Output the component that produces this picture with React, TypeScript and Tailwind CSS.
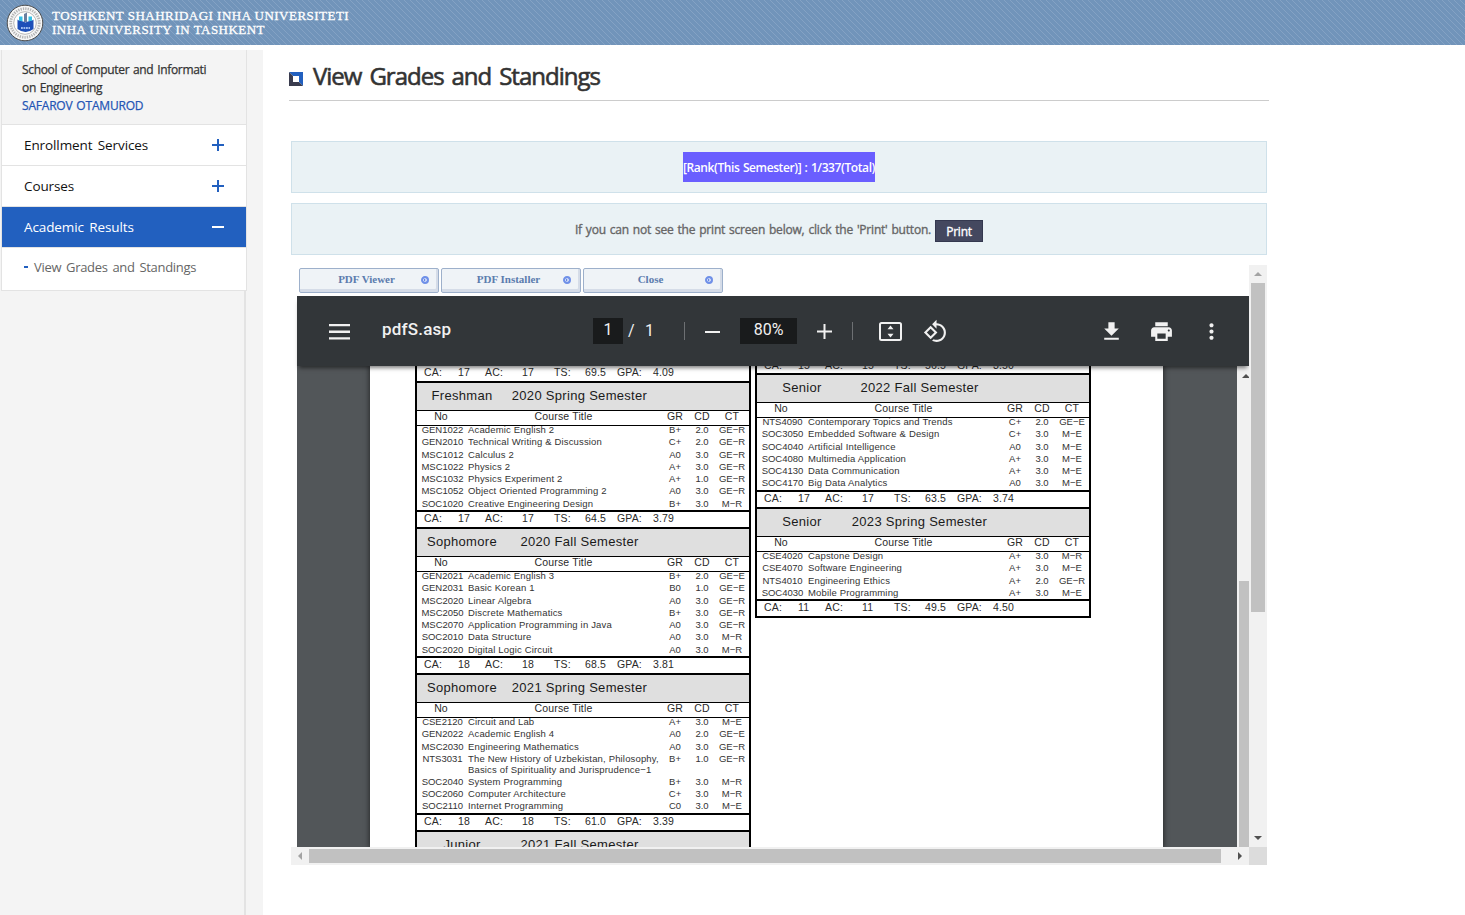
import React from "react";

type Course = [code: string, title: string, grade: string, credit: string, type: string];

interface Semester {
  year: string;
  name: string;
  courses: Course[];
  totals: string[];
  bodyHeight: string;
}

const leftSemesters: Semester[] = [
  {
    year: "Freshman",
    name: "2020 Spring Semester",
    courses: [
      ["GEN1022", "Academic English 2", "B+", "2.0", "GE−R"],
      ["GEN2010", "Technical Writing & Discussion", "C+", "2.0", "GE−R"],
      ["MSC1012", "Calculus 2", "A0", "3.0", "GE−R"],
      ["MSC1022", "Physics 2", "A+", "3.0", "GE−R"],
      ["MSC1032", "Physics Experiment 2", "A+", "1.0", "GE−R"],
      ["MSC1052", "Object Oriented Programming 2", "A0", "3.0", "GE−R"],
      ["SOC1020", "Creative Engineering Design", "B+", "3.0", "M−R"],
    ],
    totals: ["17", "17", "64.5", "3.79"],
    bodyHeight: "h-[84px]",
  },
  {
    year: "Sophomore",
    name: "2020 Fall Semester",
    courses: [
      ["GEN2021", "Academic English 3", "B+", "2.0", "GE−E"],
      ["GEN2031", "Basic Korean 1", "B0", "1.0", "GE−E"],
      ["MSC2020", "Linear Algebra", "A0", "3.0", "GE−R"],
      ["MSC2050", "Discrete Mathematics", "B+", "3.0", "GE−R"],
      ["MSC2070", "Application Programming in Java", "A0", "3.0", "GE−R"],
      ["SOC2010", "Data Structure", "A0", "3.0", "M−R"],
      ["SOC2020", "Digital Logic Circuit", "A0", "3.0", "M−R"],
    ],
    totals: ["18", "18", "68.5", "3.81"],
    bodyHeight: "h-[84px]",
  },
  {
    year: "Sophomore",
    name: "2021 Spring Semester",
    courses: [
      ["CSE2120", "Circuit and Lab", "A+", "3.0", "M−E"],
      ["GEN2022", "Academic English 4", "A0", "2.0", "GE−E"],
      ["MSC2030", "Engineering Mathematics", "A0", "3.0", "GE−R"],
      ["NTS3031", "The New History of Uzbekistan, Philosophy,\nBasics of Spirituality and Jurisprudence−1", "B+", "1.0", "GE−R"],
      ["SOC2040", "System Programming", "B+", "3.0", "M−R"],
      ["SOC2060", "Computer Architecture", "C+", "3.0", "M−R"],
      ["SOC2110", "Internet Programming", "C0", "3.0", "M−E"],
    ],
    totals: ["18", "18", "61.0", "3.39"],
    bodyHeight: "h-[95px]",
  },
];

const rightSemesters: Semester[] = [
  {
    year: "Senior",
    name: "2022 Fall Semester",
    courses: [
      ["NTS4090", "Contemporary Topics and Trends", "C+", "2.0", "GE−E"],
      ["SOC3050", "Embedded Software & Design", "C+", "3.0", "M−E"],
      ["SOC4040", "Artificial Intelligence", "A0", "3.0", "M−E"],
      ["SOC4080", "Multimedia Application", "A+", "3.0", "M−E"],
      ["SOC4130", "Data Communication", "A+", "3.0", "M−E"],
      ["SOC4170", "Big Data Analytics", "A0", "3.0", "M−E"],
    ],
    totals: ["17", "17", "63.5", "3.74"],
    bodyHeight: "h-[72px]",
  },
  {
    year: "Senior",
    name: "2023 Spring Semester",
    courses: [
      ["CSE4020", "Capstone Design", "A+", "3.0", "M−R"],
      ["CSE4070", "Software Engineering", "A+", "3.0", "M−E"],
      ["NTS4010", "Engineering Ethics", "A+", "2.0", "GE−R"],
      ["SOC4030", "Mobile Programming", "A+", "3.0", "M−E"],
    ],
    totals: ["11", "11", "49.5", "4.50"],
    bodyHeight: "h-[47px]",
  },
];

const columns = "grid grid-cols-[51px_191px_32px_22px_36px]";

function Totals({ values }: { values: string[] }) {
  return (
    <div className="grid h-[15px] grid-cols-[34px_27px_37px_32px_31px_32px_36px_80px] pl-[7px] text-[10.5px] leading-[12px] tracking-[0.15px] text-[#2a2a2a]">
      <span>CA:</span>
      <span>{values[0]}</span>
      <span>AC:</span>
      <span>{values[1]}</span>
      <span>TS:</span>
      <span>{values[2]}</span>
      <span>GPA:</span>
      <span>{values[3]}</span>
    </div>
  );
}

function SemesterHeading({ year, name }: { year: string; name: string }) {
  return (
    <div className="flex h-[27px] items-center bg-[#dfdfdf] pb-[2px] text-[13px] tracking-[0.3px] whitespace-nowrap text-[#1a1a1a]">
      <span className="w-[90px] text-center">{year}</span>
      <span className="w-[145px] text-center">{name}</span>
    </div>
  );
}

function SemesterBlock({ semester }: { semester: Semester }) {
  return (
    <section className="border-t-2 border-black">
      <SemesterHeading year={semester.year} name={semester.name} />
      <div className={`${columns} h-[16px] border-y border-black text-center text-[10.5px] leading-[11px] tracking-[0.15px] text-[#2a2a2a]`}>
        <span className="-ml-[3px]">No</span>
        <span>Course Title</span>
        <span>GR</span>
        <span>CD</span>
        <span className="pl-[2px]">CT</span>
      </div>
      <div className={`${semester.bodyHeight} flow-root text-[9.5px] leading-[12.25px] text-[#333]`}>
        <div className="-mt-[2px]">
          {semester.courses.map(([code, title, grade, credit, type]) => (
            <div key={code} className={`${columns} text-center`}>
              <span>{code}</span>
              <span className="text-left leading-[11.6px] tracking-[0.16px] whitespace-pre">{title}</span>
              <span>{grade}</span>
              <span>{credit}</span>
              <span className="pl-[2px]">{type}</span>
            </div>
          ))}
        </div>
      </div>
      <div className="border-t-2 border-black">
        <Totals values={semester.totals} />
      </div>
    </section>
  );
}

function Seal() {
  return (
    <svg width="38" height="38" viewBox="0 0 38 38" className="shrink-0">
      <circle cx="19" cy="19" r="17.800" fill="#f6f6f6" stroke="#4c4c4c" strokeWidth="1" />
      <circle cx="19" cy="19" r="14.300" fill="none" stroke="#b4b4b4" strokeWidth="2.800" strokeDasharray="1.300 1.100" />
      <circle cx="19" cy="19" r="11.300" fill="#fff" stroke="#999" strokeWidth="0.700" />
      <path d="M13 12.500h3.500v5H13zM22.500 12.500H26v5h-3.500z" fill="#35bfe6" />
      <path d="M18 10l3-1.500V18h-3z" fill="#6a7fa0" />
      <path d="M11.500 15.500l2 1.500q3-.5 6 1.500q3-2 6-1.500l2-1.500V25q-3 2.500-8 3q-5-.5-8-3z" fill="#1d4fb8" />
      <path d="M15 24h9" stroke="#9fbdf0" strokeWidth="1.800" strokeDasharray="1.800 0.700" />
    </svg>
  );
}

function MenuItem({ label, open = false }: { label: string; open?: boolean }) {
  return (
    <div className={`flex h-[41px] items-center justify-between border-b border-[#e3e3e3] px-[22px] text-[13.5px] ${open ? "bg-[#2260bf] text-white" : "bg-white text-[#111]"}`}>
      <span className="tracking-[-0.1px] [word-spacing:2px]">{label}</span>
      <svg width="12" height="12" viewBox="0 0 12 12" stroke="currentColor" strokeWidth="2" className={open ? "text-white" : "text-[#2260bf]"}>
        <path d={open ? "M0 6h12" : "M0 6h12M6 0v12"} />
      </svg>
    </div>
  );
}

function Sidebar() {
  return (
    <aside className="flex w-[263px] shrink-0 bg-[#f4f4f4]">
      <div className="flex w-[247px] flex-col">
        <div className="ml-px border-x border-b border-[#e3e3e3]">
          <div className="h-[75px] border-b border-[#e3e3e3] bg-[#f4f4f4] pt-[11px] pl-5 text-[12px] leading-[18px] tracking-[-0.33px] text-[#333] [-webkit-text-stroke:0.25px] [word-spacing:1px]">
            <p>School of Computer and Informati</p>
            <p>on Engineering</p>
            <p className="tracking-[-0.2px] text-[#2455b5]">SAFAROV OTAMUROD</p>
          </div>
          <MenuItem label="Enrollment Services" />
          <MenuItem label="Courses" />
          <MenuItem label="Academic Results" open />
          <div className="flex h-[42px] items-center bg-white pb-[2px] pl-[22px] text-[13px] text-[#666]">
            <span className="-mt-[2px] mr-[6px] h-[2px] w-1 bg-[#2260bf]" />
            <span className="tracking-[-0.3px] [word-spacing:1.7px]">View Grades and Standings</span>
          </div>
        </div>
        <div className="mr-px flex-1 border-r-2 border-[#e3e3e3]" />
      </div>
    </aside>
  );
}

function PdfButton({ label }: { label: string }) {
  return (
    <button className="flex h-[25px] w-[140px] items-center rounded-[2px] border border-[#9db0cb] bg-[#eff3f7] pr-[9px] pb-[2px] font-['Liberation_Serif',serif] text-[11px] font-bold text-[#5b7cae] shadow-[inset_-2px_-3px_0_#d5dce8]">
      <span className="flex-1 pl-[12px] text-center">{label}</span>
      <svg width="8" height="8" viewBox="0 0 8 8">
        <circle cx="4" cy="4" r="2.900" fill="#fff" stroke="#6f90e8" strokeWidth="2.200" />
        <path d="M3 2.600L5 4L3 5.400z" fill="#5f82e2" />
      </svg>
    </button>
  );
}

function Toolbar() {
  return (
    <div className="relative z-10 flex h-[70px] shrink-0 items-center bg-[#323639] font-[Roboto,sans-serif] text-[#f1f1f1] shadow-[0_4px_4px_-2px_rgba(0,0,0,0.5)]">
      <svg width="21" height="16" viewBox="0 0 21 16" fill="currentColor" className="mt-px ml-8">
        <path d="M0 0h21v2.300H0zM0 6.600h21v2.300H0zM0 13.200h21v2.300H0z" />
      </svg>
      <span className="-mt-[2px] ml-8 w-[211px] text-[17px] font-medium tracking-[0.2px]">pdfS.asp</span>
      <span className="h-[26px] w-[30px] bg-[#191b1c] text-center text-[16px] leading-[23px]">1</span>
      <span className="ml-[5px] w-[7px] text-[16px]">/</span>
      <span className="ml-[10px] w-[10px] text-[16px]">1</span>
      <span className="ml-[29px] h-[18px] w-px bg-[#6d7073]" />
      <span className="mt-px ml-5 h-[2px] w-[15px] bg-[#f1f1f1]" />
      <span className="ml-5 h-[26px] w-[57px] bg-[#191b1c] text-center text-[16px] leading-[23px]">80%</span>
      <svg width="15" height="15" viewBox="0 0 15 15" fill="currentColor" className="mt-px ml-5">
        <path d="M6.500 0h2v6.500H15v2H8.500V15h-2V8.500H0v-2h6.500z" />
      </svg>
      <span className="ml-5 h-[18px] w-px bg-[#6d7073]" />
      <svg width="23" height="19" viewBox="0 0 23 19" className="mt-px ml-[26px]">
        <rect x="1" y="1" width="21" height="17" rx="1.500" fill="none" stroke="currentColor" strokeWidth="2" />
        <path d="M11.500 3.500l3 3.800h-6zM11.500 15.500l3-3.800h-6z" fill="currentColor" />
      </svg>
      <svg width="25" height="25" viewBox="0 0 24 24" fill="currentColor" className="mt-px ml-[21px]">
        <path d="M7.340 6.410L.860 12.900l6.490 6.480 6.490-6.480-6.500-6.490zM3.690 12.900l3.660-3.660L11 12.900l-3.660 3.660-3.650-3.660zm15.670-6.260C17.610 4.880 15.300 4 13 4V.760L8.760 5 13 9.240V6c1.790 0 3.580.680 4.950 2.050 2.730 2.730 2.730 7.170 0 9.900C16.580 19.320 14.790 20 13 20c-.970 0-1.940-.210-2.840-.610l-1.490 1.490C10.020 21.620 11.510 22 13 22c2.300 0 4.610-.880 6.360-2.640 3.520-3.510 3.520-9.210 0-12.720z" />
      </svg>
      <svg width="25" height="25" viewBox="0 0 24 24" fill="currentColor" className="mt-px mr-[25px] ml-auto">
        <path d="M19 9h-4V3H9v6H5l7 7 7-7zM5 18v2h14v-2H5z" />
      </svg>
      <svg width="25" height="25" viewBox="0 0 24 24" fill="currentColor" className="mt-px mr-[25px]">
        <path d="M19 8H5c-1.660 0-3 1.340-3 3v6h4v4h12v-4h4v-6c0-1.660-1.340-3-3-3zm-3 11H8v-5h8v5zm3-7c-.550 0-1-.450-1-1s.450-1 1-1 1 .450 1 1-.450 1-1 1zm-1-9H6v4h12V3z" />
      </svg>
      <svg width="25" height="25" viewBox="0 0 24 24" fill="currentColor" className="mt-px mr-[25px]">
        <path d="M12 8c1.100 0 2-.900 2-2s-.900-2-2-2-2 .900-2 2 .900 2 2 2zm0 2c-1.100 0-2 .900-2 2s.900 2 2 2 2-.900 2-2-.900-2-2-2zm0 6c-1.100 0-2 .900-2 2s.900 2 2 2 2-.900 2-2-.900-2-2-2z" />
      </svg>
    </div>
  );
}

function Arrow({ d, color = "#505050" }: { d: string; color?: string }) {
  return (
    <svg width="8" height="8" viewBox="0 0 8 8" fill={color}>
      <path d={d} />
    </svg>
  );
}

const UP = "M0 6L4 2L8 6z";
const DOWN = "M0 2L4 6L8 2z";
const LEFT = "M6 0L2 4L6 8z";
const RIGHT = "M2 0L6 4L2 8z";

function PdfDocument() {
  return (
    <div className="flex h-[481px] overflow-hidden bg-[#525659] pl-[73px] font-['Liberation_Sans',sans-serif]">
      <div className="flex w-[793px] gap-[4px] bg-white pl-[45px] shadow-[0_0_5px_1px_rgba(0,0,0,0.5)]">
        <div className="w-[336px] border-x-2 border-black">
          <div className="h-[15px]">
            <Totals values={["17", "17", "69.5", "4.09"]} />
          </div>
          {leftSemesters.map((s) => (
            <SemesterBlock key={s.name} semester={s} />
          ))}
          <div className="border-t-2 border-black">
            <SemesterHeading year="Junior" name="2021 Fall Semester" />
          </div>
        </div>
        <div className="h-[252px] w-[336px] border-x-2 border-b-2 border-black">
          <div className="flow-root h-[8px]">
            <div className="-mt-[7px]">
              <Totals values={["15", "15", "56.5", "3.50"]} />
            </div>
          </div>
          <div className="-mt-px">
            {rightSemesters.map((s) => (
              <SemesterBlock key={s.name} semester={s} />
            ))}
          </div>
        </div>
      </div>
      <div className="ml-auto w-[12px] bg-[#f1f1f1] pl-[2px]">
        <div className="h-[215px] w-[10px] overflow-hidden pt-[6px] pl-[3px]">
          <Arrow d={UP} />
        </div>
        <div className="h-[266px] bg-[#c1c1c1]" />
      </div>
    </div>
  );
}

function PdfFrame() {
  return (
    <div className="mt-[10px] ml-[2px] grid w-[976px] grid-cols-[958px_18px] grid-rows-[582px_18px]">
      <div className="overflow-hidden pl-[6px]">
        <div className="flex h-[31px] gap-[2px] pt-[3px] pl-[2px]">
          <PdfButton label="PDF Viewer" />
          <PdfButton label="PDF Installer" />
          <PdfButton label="Close" />
        </div>
        <Toolbar />
        <PdfDocument />
      </div>
      <div className="flex flex-col items-center bg-[#f1f1f1]">
        <div className="flex h-[18px] items-center">
          <Arrow d={UP} color="#a3a3a3" />
        </div>
        <div className="h-[329px] w-[14px] bg-[#c1c1c1]" />
        <div className="mt-auto flex h-[18px] items-center">
          <Arrow d={DOWN} />
        </div>
      </div>
      <div className="flex items-center bg-[#f1f1f1]">
        <div className="flex w-[18px] justify-center">
          <Arrow d={LEFT} color="#a3a3a3" />
        </div>
        <div className="h-[14px] w-[912px] bg-[#c1c1c1]" />
        <div className="ml-auto flex w-[18px] justify-center">
          <Arrow d={RIGHT} />
        </div>
      </div>
      <div className="bg-[#dcdcdc]" />
    </div>
  );
}

export default function App() {
  return (
    <div className="flex h-[915px] w-[1465px] flex-col overflow-hidden bg-white font-['Open_Sans','Noto_Sans',sans-serif]">
      <header className="flex h-[45px] shrink-0 items-center bg-[#7194ba] bg-[repeating-linear-gradient(45deg,transparent_0px,transparent_3.5355px,#84a2c4_3.5355px,#84a2c4_4.2426px)] pl-[6px]">
        <Seal />
        <div className="ml-2 font-['Liberation_Serif',serif] text-[13px] leading-[14px] tracking-[0.48px] whitespace-nowrap text-white [-webkit-text-stroke:0.3px]">
          <p>TOSHKENT SHAHRIDAGI INHA UNIVERSITETI</p>
          <p>INHA UNIVERSITY IN TASHKENT</p>
        </div>
      </header>
      <div className="mt-[5px] flex flex-1">
        <Sidebar />
        <main className="ml-[26px] w-[980px]">
          <div className="flex h-[51px] items-center border-b border-[#ccc]">
            <svg width="14" height="14" viewBox="0 0 14 14" className="mt-[7px]">
              <path d="M0 0h14v14z" fill="#2260bf" />
              <path d="M0 0v14h14z" fill="#3a3c4e" />
              <path d="M4 4h6v6H4z" fill="#fff" />
            </svg>
            <h1 className="mt-[2px] ml-[10px] text-[24px] tracking-[-1px] whitespace-nowrap text-[#333] [-webkit-text-stroke:0.6px] [word-spacing:2.7px]">View Grades and Standings</h1>
          </div>
          <div className="mt-10 ml-[2px] flex h-[52px] w-[976px] items-center justify-center border border-[#cfe1ea] bg-[#eaf2f5]">
            <span className="h-[30px] bg-[#6a5eff] text-[12px] leading-[32px] font-semibold tracking-[-0.4px] text-white [word-spacing:0.7px]">[Rank(This Semester)] : 1/337(Total)</span>
          </div>
          <div className="mt-[10px] ml-[2px] flex h-[52px] w-[976px] items-center justify-center border border-[#cfe1ea] bg-[#eaf2f5] text-[12px] tracking-[-0.2px] text-[#666] [-webkit-text-stroke:0.35px] [word-spacing:1px]">
            <span className="pt-[2px]">If you can not see the print screen below, click the 'Print' button.</span>
            <span className="mt-[3px] ml-1 flex h-[22px] w-12 items-center justify-center border border-[#34384f] bg-[#44485f] pt-[2px] text-white">Print</span>
          </div>
          <PdfFrame />
        </main>
      </div>
    </div>
  );
}
